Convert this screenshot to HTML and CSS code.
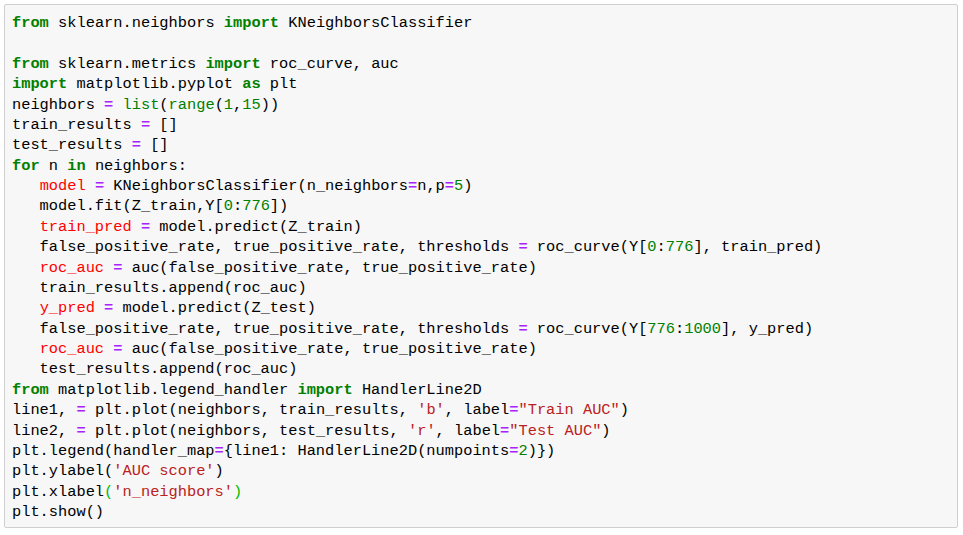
FILE: index.html
```html
<!DOCTYPE html>
<html>
<head>
<meta charset="utf-8">
<link rel="stylesheet" href="styles.css">
</head>
<body>
<div class="cell">
<pre class="code"><span class="kw">from</span> sklearn.neighbors <span class="kw">import</span> KNeighborsClassifier

<span class="kw">from</span> sklearn.metrics <span class="kw">import</span> roc_curve, auc
<span class="kw">import</span> matplotlib.pyplot <span class="kw">as</span> plt
neighbors <span class="op">=</span> <span class="bi">list</span>(<span class="bi">range</span>(<span class="num">1</span>,<span class="num">15</span>))
train_results <span class="op">=</span> []
test_results <span class="op">=</span> []
<span class="kw">for</span> n <span class="kw">in</span> neighbors:
   <span class="var">model</span> <span class="op">=</span> KNeighborsClassifier(n_neighbors<span class="op">=</span>n,p<span class="op">=</span><span class="num">5</span>)
   model.fit(Z_train,Y[<span class="num">0</span>:<span class="num">776</span>])
   <span class="var">train_pred</span> <span class="op">=</span> model.predict(Z_train)
   false_positive_rate, true_positive_rate, thresholds <span class="op">=</span> roc_curve(Y[<span class="num">0</span>:<span class="num">776</span>], train_pred)
   <span class="var">roc_auc</span> <span class="op">=</span> auc(false_positive_rate, true_positive_rate)
   train_results.append(roc_auc)
   <span class="var">y_pred</span> <span class="op">=</span> model.predict(Z_test)
   false_positive_rate, true_positive_rate, thresholds <span class="op">=</span> roc_curve(Y[<span class="num">776</span>:<span class="num">1000</span>], y_pred)
   <span class="var">roc_auc</span> <span class="op">=</span> auc(false_positive_rate, true_positive_rate)
   test_results.append(roc_auc)
<span class="kw">from</span> matplotlib.legend_handler <span class="kw">import</span> HandlerLine2D
line1, <span class="op">=</span> plt.plot(neighbors, train_results, <span class="str">'b'</span>, label<span class="op">=</span><span class="str">"Train AUC"</span>)
line2, <span class="op">=</span> plt.plot(neighbors, test_results, <span class="str">'r'</span>, label<span class="op">=</span><span class="str">"Test AUC"</span>)
plt.legend(handler_map<span class="op">=</span>{line1: HandlerLine2D(numpoints<span class="op">=</span><span class="num">2</span>)})
plt.ylabel(<span class="str">'AUC score'</span>)
plt.xlabel<span class="match">(</span><span class="str">'n_neighbors'</span><span class="match">)</span>
plt.show()</pre>
</div>
</body>
</html>
```

FILE: styles.css
```css
html, body {
  margin: 0;
  padding: 0;
  background: #ffffff;
}

body {
  padding: 4px 5px 0 4px;
}

.cell {
  box-sizing: border-box;
  width: 954px;
  height: 524px;
  background: #f7f7f7;
  border: 1px solid #cfcfcf;
  border-radius: 2px;
  padding: 8px 7px 0 7px;
}

.code {
  margin: 0;
  font-family: "Liberation Mono", "DejaVu Sans Mono", monospace;
  font-size: 15.35px;
  line-height: 20.375px;
  color: #000000;
  white-space: pre;
}

.kw {
  color: #008000;
  font-weight: bold;
}

.op {
  color: #aa22ff;
  font-weight: bold;
}

.bi {
  color: #008000;
}

.num {
  color: #008000;
}

.str {
  color: #ba2121;
}

.var {
  color: #ff0000;
}

.match {
  color: #00bb00;
}
```
